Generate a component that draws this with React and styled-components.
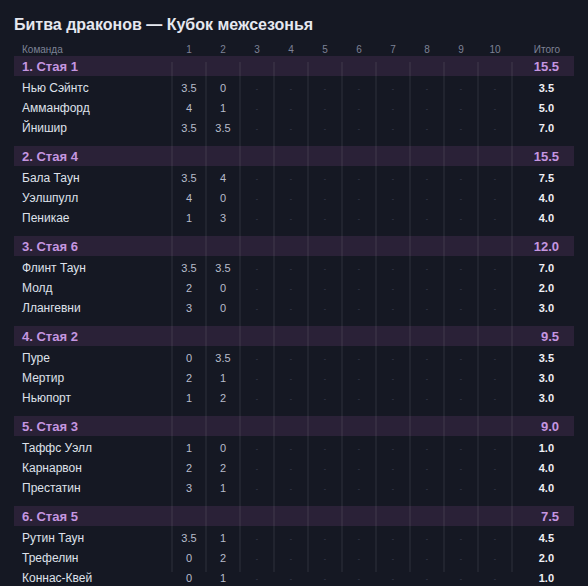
import React from 'react';
import styled, { createGlobalStyle } from 'styled-components';

const GlobalStyle = createGlobalStyle`
    html, body {
        margin: 0;
        padding: 0;
        background: #151823;
    }
    body {
        font-family: "Liberation Sans", Arial, sans-serif;
    }
`;

const COLS = '158px repeat(10, 34px) 62px';

const Page = styled.div`
    padding: 15px 14px 0;
    background: #151823;
    min-height: 100vh;
    box-sizing: border-box;
`;

const Title = styled.h1`
    margin: 0 0 9px;
    font-size: 16px;
    line-height: 20px;
    font-weight: 700;
    color: #e6e8f0;
`;

const Table = styled.div`
    position: relative;
    width: 560px;
`;

const HeaderRow = styled.div`
    display: grid;
    grid-template-columns: ${COLS};
    height: 12px;
    font-size: 10px;
    line-height: 12px;
    color: #7d8296;
`;

const HeadCell = styled.div`
    text-align: ${p => p.$align || 'center'};
    padding-left: ${p => p.$align === 'left' ? '8px' : '0'};
    padding-right: ${p => p.$align === 'right' ? '14px' : '0'};
`;

const Group = styled.div`
    margin-bottom: 8px;
`;

const Band = styled.div`
    display: grid;
    grid-template-columns: ${COLS};
    height: 20px;
    align-items: center;
    background: #2a2137;
    margin-bottom: 2px;
    font-size: 13px;
    font-weight: 700;
    color: #c596e0;
`;

const BandName = styled.div`
    grid-column: 1 / 12;
    padding-left: 8px;
`;

const BandTotal = styled.div`
    text-align: right;
    padding-right: 15px;
`;

const Row = styled.div`
    display: grid;
    grid-template-columns: ${COLS};
    height: 20px;
    align-items: center;
`;

const TeamName = styled.div`
    padding-left: 8px;
    font-size: 12px;
    color: #dfe1ea;
    white-space: nowrap;
`;

const Score = styled.div`
    text-align: center;
    font-size: ${p => p.$empty ? '7px' : '11px'};
    color: ${p => p.$empty ? '#3f4357' : '#b8bccb'};
`;

const Total = styled.div`
    text-align: right;
    padding-right: 20px;
    font-size: 11px;
    font-weight: 700;
    color: #f0f0f5;
`;

const Guides = styled.div`
    position: absolute;
    top: 18px;
    left: 0;
    width: 560px;
    height: 510px;
    pointer-events: none;
`;

const Guide = styled.div`
    position: absolute;
    top: 0;
    bottom: 0;
    width: 2px;
    margin-left: -1px;
    background: rgba(255, 255, 255, 0.055);
`;

const groups = [
    { name: '1. Стая 1', total: '15.5', teams: [
        ['Нью Сэйнтс', '3.5', '0', '3.5'],
        ['Амманфорд', '4', '1', '5.0'],
        ['Йнишир', '3.5', '3.5', '7.0'],
    ] },
    { name: '2. Стая 4', total: '15.5', teams: [
        ['Бала Таун', '3.5', '4', '7.5'],
        ['Уэлшпулл', '4', '0', '4.0'],
        ['Пеникае', '1', '3', '4.0'],
    ] },
    { name: '3. Стая 6', total: '12.0', teams: [
        ['Флинт Таун', '3.5', '3.5', '7.0'],
        ['Молд', '2', '0', '2.0'],
        ['Ллангевни', '3', '0', '3.0'],
    ] },
    { name: '4. Стая 2', total: '9.5', teams: [
        ['Пуре', '0', '3.5', '3.5'],
        ['Мертир', '2', '1', '3.0'],
        ['Ньюпорт', '1', '2', '3.0'],
    ] },
    { name: '5. Стая 3', total: '9.0', teams: [
        ['Таффс Уэлл', '1', '0', '1.0'],
        ['Карнарвон', '2', '2', '4.0'],
        ['Престатин', '3', '1', '4.0'],
    ] },
    { name: '6. Стая 5', total: '7.5', teams: [
        ['Рутин Таун', '3.5', '1', '4.5'],
        ['Трефелин', '0', '2', '2.0'],
        ['Коннас-Квей', '0', '1', '1.0'],
    ] },
];

const rounds = Array.from({ length: 10 }, (_, i) => i + 1);

const App = () => (
    <>
        <GlobalStyle />
        <Page>
            <Title>Битва драконов — Кубок межсезонья</Title>
            <Table>
                <HeaderRow>
                    <HeadCell $align="left">Команда</HeadCell>
                    {rounds.map(r => <HeadCell key={r}>{r}</HeadCell>)}
                    <HeadCell $align="right">Итого</HeadCell>
                </HeaderRow>
                {groups.map(g => (
                    <Group key={g.name}>
                        <Band>
                            <BandName>{g.name}</BandName>
                            <BandTotal>{g.total}</BandTotal>
                        </Band>
                        {g.teams.map(([team, r1, r2, total]) => (
                            <Row key={team}>
                                <TeamName>{team}</TeamName>
                                <Score>{r1}</Score>
                                <Score>{r2}</Score>
                                {rounds.slice(2).map(r => <Score key={r} $empty>-</Score>)}
                                <Total>{total}</Total>
                            </Row>
                        ))}
                    </Group>
                ))}
                <Guides>
                    {Array.from({ length: 11 }, (_, i) => (
                        <Guide key={i} style={{ left: 158 + i * 34 }} />
                    ))}
                </Guides>
            </Table>
        </Page>
    </>
);

export default App;
